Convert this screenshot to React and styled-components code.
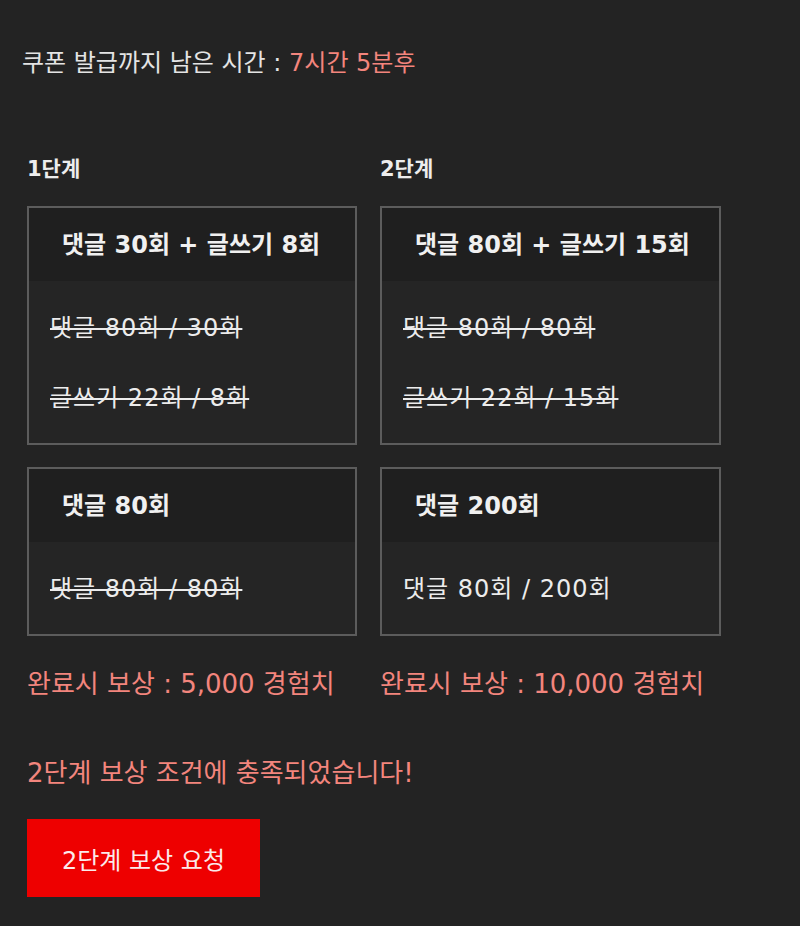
import React from "react";
import styled, { createGlobalStyle } from "styled-components";

const Global = createGlobalStyle`
  html, body { margin: 0; padding: 0; background: #232323; }
  body { font-family: "DejaVu Sans", "Noto Sans CJK KR", sans-serif; color: #ececec; }
`;

const Page = styled.div`
  min-height: 926px;
  background: #232323;
  padding: 46px 0 0 0;
  box-sizing: border-box;
`;

const Timer = styled.div`
  padding-left: 22px;
  font-size: 24px;
  line-height: 34px;
  color: #e4e4e4;
  white-space: nowrap;
`;

const Accent = styled.span`
  color: #f3857d;
`;

const Stages = styled.div`
  display: grid;
  grid-template-columns: 330px 341px;
  column-gap: 23px;
  margin: 74px 0 0 27px;
`;

const Column = styled.div`
  display: flex;
  flex-direction: column;
`;

const StageLabel = styled.div`
  font-size: 21px;
  font-weight: 700;
  line-height: 30px;
  margin-bottom: 22px;
  color: #ededed;
`;

const Card = styled.div`
  border: 2px solid #5c5c5c;
  background: #252525;
  & + & { margin-top: 22px; }
`;

const CardTitle = styled.div`
  height: 73px;
  box-sizing: border-box;
  display: flex;
  align-items: center;
  padding: 0 33px 5px;
  background: #1f1f1f;
  font-size: 24px;
  font-weight: 700;
  color: #f0f0f0;
  white-space: nowrap;
`;

const CardBody = styled.div`
  padding: 9px 21px 13px;
`;

const Row = styled.div`
  height: 70px;
  display: flex;
  align-items: center;
  font-size: 24px;
  letter-spacing: 1px;
  color: #ececec;
  white-space: nowrap;
  text-decoration: ${(p) => (p.$done ? "line-through" : "none")};
  text-decoration-thickness: 2px;
`;

const Reward = styled.div`
  margin-top: 31px;
  font-size: 26px;
  line-height: 34px;
  color: #f3857d;
  white-space: nowrap;
`;

const Notice = styled.div`
  margin: 55px 0 0 27px;
  font-size: 26px;
  line-height: 34px;
  color: #f3857d;
  white-space: nowrap;
`;

const RequestButton = styled.button`
  margin: 29px 0 0 27px;
  width: 233px;
  height: 78px;
  border: none;
  background: #ee0000;
  color: #fbeaea;
  font-family: inherit;
  font-size: 24px;
  display: flex;
  align-items: center;
  justify-content: center;
  cursor: pointer;
`;

const stages = [
  {
    label: "1단계",
    cards: [
      {
        title: "댓글 30회 + 글쓰기 8회",
        rows: [
          { text: "댓글 80회 / 30회", done: true },
          { text: "글쓰기 22회 / 8회", done: true },
        ],
      },
      {
        title: "댓글 80회",
        rows: [{ text: "댓글 80회 / 80회", done: true }],
      },
    ],
    reward: "완료시 보상 : 5,000 경험치",
  },
  {
    label: "2단계",
    cards: [
      {
        title: "댓글 80회 + 글쓰기 15회",
        rows: [
          { text: "댓글 80회 / 80회", done: true },
          { text: "글쓰기 22회 / 15회", done: true },
        ],
      },
      {
        title: "댓글 200회",
        rows: [{ text: "댓글 80회 / 200회", done: false }],
      },
    ],
    reward: "완료시 보상 : 10,000 경험치",
  },
];

export default function App() {
  return (
    <>
      <Global />
      <Page>
        <Timer>
          쿠폰 발급까지 남은 시간 : <Accent>7시간 5분후</Accent>
        </Timer>
        <Stages>
          {stages.map((s) => (
            <Column key={s.label}>
              <StageLabel>{s.label}</StageLabel>
              {s.cards.map((c) => (
                <Card key={c.title}>
                  <CardTitle>{c.title}</CardTitle>
                  <CardBody>
                    {c.rows.map((r) => (
                      <Row key={r.text} $done={r.done}>
                        {r.text}
                      </Row>
                    ))}
                  </CardBody>
                </Card>
              ))}
              <Reward>{s.reward}</Reward>
            </Column>
          ))}
        </Stages>
        <Notice>2단계 보상 조건에 충족되었습니다!</Notice>
        <RequestButton>2단계 보상 요청</RequestButton>
      </Page>
    </>
  );
}
